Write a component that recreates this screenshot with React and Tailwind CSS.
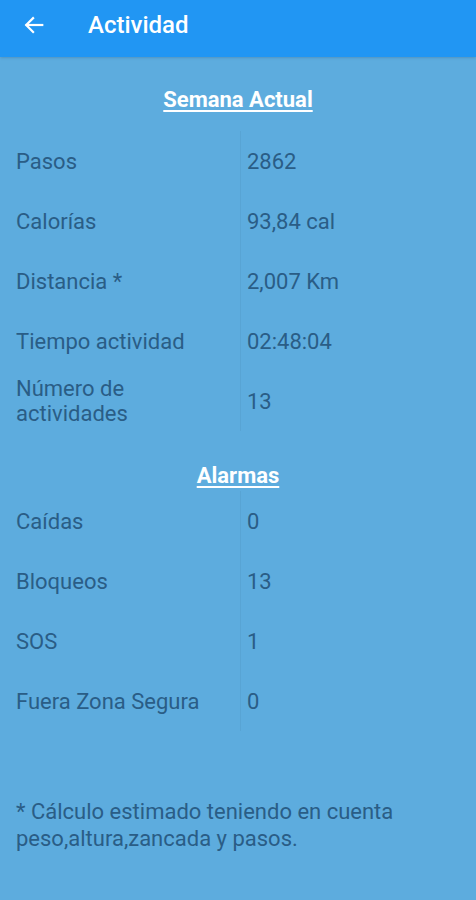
import React from 'react';

const semana = [
  ['Pasos', '2862'],
  ['Calorías', '93,84 cal'],
  ['Distancia *', '2,007 Km'],
  ['Tiempo actividad', '02:48:04'],
  ['Número de actividades', '13'],
];

const alarmas = [
  ['Caídas', '0'],
  ['Bloqueos', '13'],
  ['SOS', '1'],
  ['Fuera Zona Segura', '0'],
];

const Tabla = ({ rows }) => (
  <div className="flex flex-col">
    {rows.map(([label, value]) => (
      <div key={label} className="flex h-[60px] items-center">
        <div className="w-[240px] pl-4 pr-3 leading-[25px] text-[22px] text-[#2a5d86]">{label}</div>
        <div className="flex h-full items-center border-l border-[#58a4d4] pl-[6px] text-[22px] text-[#2a5d86]">
          {value}
        </div>
      </div>
    ))}
  </div>
);

const App = () => {
  return (
    <div className="flex min-h-[900px] w-[476px] flex-col bg-[#5dacde] font-['Roboto',sans-serif]">
      <div className="flex h-[57px] items-center bg-[#2196f3] pb-[7px] shadow-sm">
        <button className="ml-[22px] flex h-6 w-6 items-center justify-center text-white">
          <svg width="22" height="22" viewBox="0 0 24 24" fill="none" stroke="currentColor" strokeWidth="2.4" strokeLinecap="square">
            <path d="M21 12H4" />
            <path d="M11 4.5L3.5 12 11 19.5" />
          </svg>
        </button>
        <h1 className="ml-[42px] text-[24px] font-medium text-white">Actividad</h1>
      </div>

      <h2 className="mt-[28px] text-center text-[22px] leading-[30px] font-bold text-white underline underline-offset-[3px] decoration-[1.5px]">
        Semana Actual
      </h2>
      <div className="mt-[16px]">
        <Tabla rows={semana} />
      </div>

      <h2 className="mt-[30px] text-center text-[22px] leading-[30px] font-bold text-white underline underline-offset-[3px] decoration-[1.5px]">
        Alarmas
      </h2>
      <div className="mt-0">
        <Tabla rows={alarmas} />
      </div>

      <p className="mt-[67px] px-4 text-[22px] leading-[27px] text-[#2a5d86]">
        * Cálculo estimado teniendo en cuenta peso,altura,zancada y pasos.
      </p>
    </div>
  );
};

export default App;
